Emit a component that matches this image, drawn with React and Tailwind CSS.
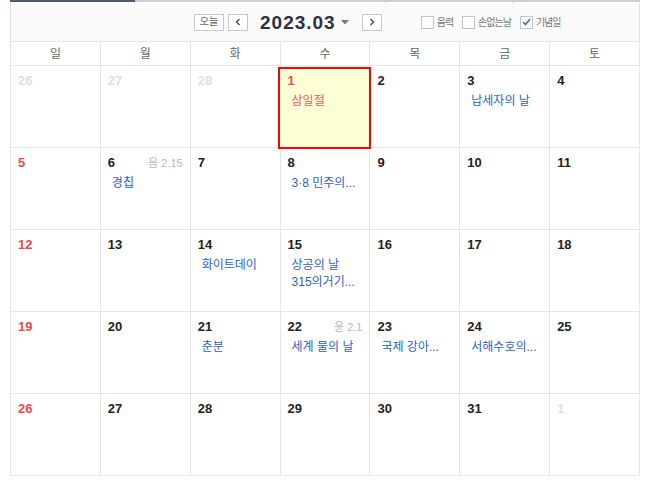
import React from 'react';

const FONT = '"Liberation Sans", "Noto Sans CJK KR", sans-serif';

// month grid: [day, kind, lunar, events, eventColor]
// kind: 'other' | 'sun' | 'day'
const weeks = [
  [
    { d: 26, kind: 'other' },
    { d: 27, kind: 'other' },
    { d: 28, kind: 'other' },
    { d: 1, kind: 'sun', events: ['삼일절'], red: true, selected: true },
    { d: 2 },
    { d: 3, events: ['납세자의 날'] },
    { d: 4 },
  ],
  [
    { d: 5, kind: 'sun' },
    { d: 6, lunar: '음 2.15', events: ['경칩'] },
    { d: 7 },
    { d: 8, events: ['3·8 민주의...'] },
    { d: 9 },
    { d: 10 },
    { d: 11 },
  ],
  [
    { d: 12, kind: 'sun' },
    { d: 13 },
    { d: 14, events: ['화이트데이'] },
    { d: 15, events: ['상공의 날', '315의거기...'] },
    { d: 16 },
    { d: 17 },
    { d: 18 },
  ],
  [
    { d: 19, kind: 'sun' },
    { d: 20 },
    { d: 21, events: ['춘분'] },
    { d: 22, lunar: '윤 2.1', events: ['세계 물의 날'] },
    { d: 23, events: ['국제 강아...'] },
    { d: 24, events: ['서해수호의...'] },
    { d: 25 },
  ],
  [
    { d: 26, kind: 'sun' },
    { d: 27 },
    { d: 28 },
    { d: 29 },
    { d: 30 },
    { d: 31 },
    { d: 1, kind: 'other' },
  ],
];

const dayNames = ['일', '월', '화', '수', '목', '금', '토'];

function Checkbox({ checked, label }) {
  return (
    <label className="flex items-center gap-[3px] text-[10px] tracking-[-1px] text-[#777]">
      <span className="w-[13px] h-[13px] border border-[#c4c4c4] bg-white flex items-center justify-center">
        {checked && (
          <svg width="9" height="8" viewBox="0 0 9 8">
            <path d="M1 4 L3.5 6.5 L8 1" fill="none" stroke="#3b74c4" strokeWidth="1.6" />
          </svg>
        )}
      </span>
      {label}
    </label>
  );
}

function Cell({ cell }) {
  const numColor =
    cell.kind === 'other'
      ? 'text-[#e0e0e0]'
      : cell.kind === 'sun'
        ? 'text-[#f2474f]'
        : 'text-[#222]';
  return (
    <div className="relative h-[82px] border-r border-b border-[#e6e6e6]">
      {cell.selected && (
        <div className="absolute top-[1px] -left-[3px] -right-[2px] -bottom-[2px] border-2 border-[#ff0000] bg-[#ffffd6] z-10" />
      )}
      <div className="relative z-20 pt-[6px] px-[7px]">
        <div className="flex items-center justify-between h-[18px]">
          <span className={`text-[13px] font-bold ${numColor}`}>{cell.d}</span>
          {cell.lunar && <span className="text-[11px] text-[#b8b8b8]">{cell.lunar}</span>}
        </div>
        {cell.events && (
          <div className="mt-[3px] pl-[4px]">
            {cell.events.map((e) => (
              <div
                key={e}
                className={`text-[12px] leading-[17px] whitespace-nowrap ${cell.red ? 'text-[#f25a5a]' : 'text-[#2f5fc4]'}`}
              >
                {e}
              </div>
            ))}
          </div>
        )}
      </div>
    </div>
  );
}

export default function App() {
  return (
    <div className="w-[652px] h-[486px] bg-white overflow-hidden" style={{ fontFamily: FONT }}>
      <div className="ml-[10px] w-[630px]">
        {/* cut-off tab strip */}
        <div className="flex h-[3px]">
          <div className="w-[125px] h-[2px] bg-[#4d5a70]" />
          <div className="flex-1 relative h-[2px] bg-[#c9cdd4]">
            <span className="absolute left-[250px] top-0 w-[1px] h-[3px] bg-[#c9cdd4]" />
            <span className="absolute left-[377px] top-0 w-[1px] h-[3px] bg-[#c9cdd4]" />
          </div>
        </div>

        {/* toolbar */}
        <div className="h-[38px] bg-[#fafafa] border-l border-r border-[#e2e2e2] flex items-center">
          <div className="flex items-center pl-[183px]">
            <button className="w-[30px] h-[17px] border border-[#c8c8c8] bg-white text-[10px] text-[#666] leading-none flex items-center justify-center">
              오늘
            </button>
            <button className="ml-[4px] w-[20px] h-[17px] border border-[#c8c8c8] bg-white flex items-center justify-center">
              <svg width="6" height="8" viewBox="0 0 6 8">
                <path d="M4.5 1 L1.5 4 L4.5 7" fill="none" stroke="#555" strokeWidth="1.5" />
              </svg>
            </button>
            <span className="ml-[12px] text-[19px] font-bold tracking-[1px] text-[#2c2f46] leading-none">2023.03</span>
            <svg className="ml-[5px]" width="8" height="5" viewBox="0 0 8 5">
              <path d="M0 0 L8 0 L4 4.5 Z" fill="#777" />
            </svg>
            <button className="ml-[13px] w-[20px] h-[17px] border border-[#c8c8c8] bg-white flex items-center justify-center">
              <svg width="6" height="8" viewBox="0 0 6 8">
                <path d="M1.5 1 L4.5 4 L1.5 7" fill="none" stroke="#555" strokeWidth="1.5" />
              </svg>
            </button>
          </div>
          <div className="flex items-center gap-[9px] ml-[39px]">
            <Checkbox label="음력" />
            <Checkbox label="손없는날" />
            <Checkbox checked label="기념일" />
          </div>
        </div>

        {/* calendar grid */}
        <div className="grid grid-cols-7 border-l border-t border-[#e6e6e6]">
          {dayNames.map((n) => (
            <div
              key={n}
              className="h-[24px] border-r border-b border-[#e6e6e6] flex items-center justify-center text-[12px] text-[#666]"
            >
              {n}
            </div>
          ))}
          {weeks.flat().map((c, i) => (
            <Cell key={i} cell={c} />
          ))}
        </div>
      </div>
    </div>
  );
}
